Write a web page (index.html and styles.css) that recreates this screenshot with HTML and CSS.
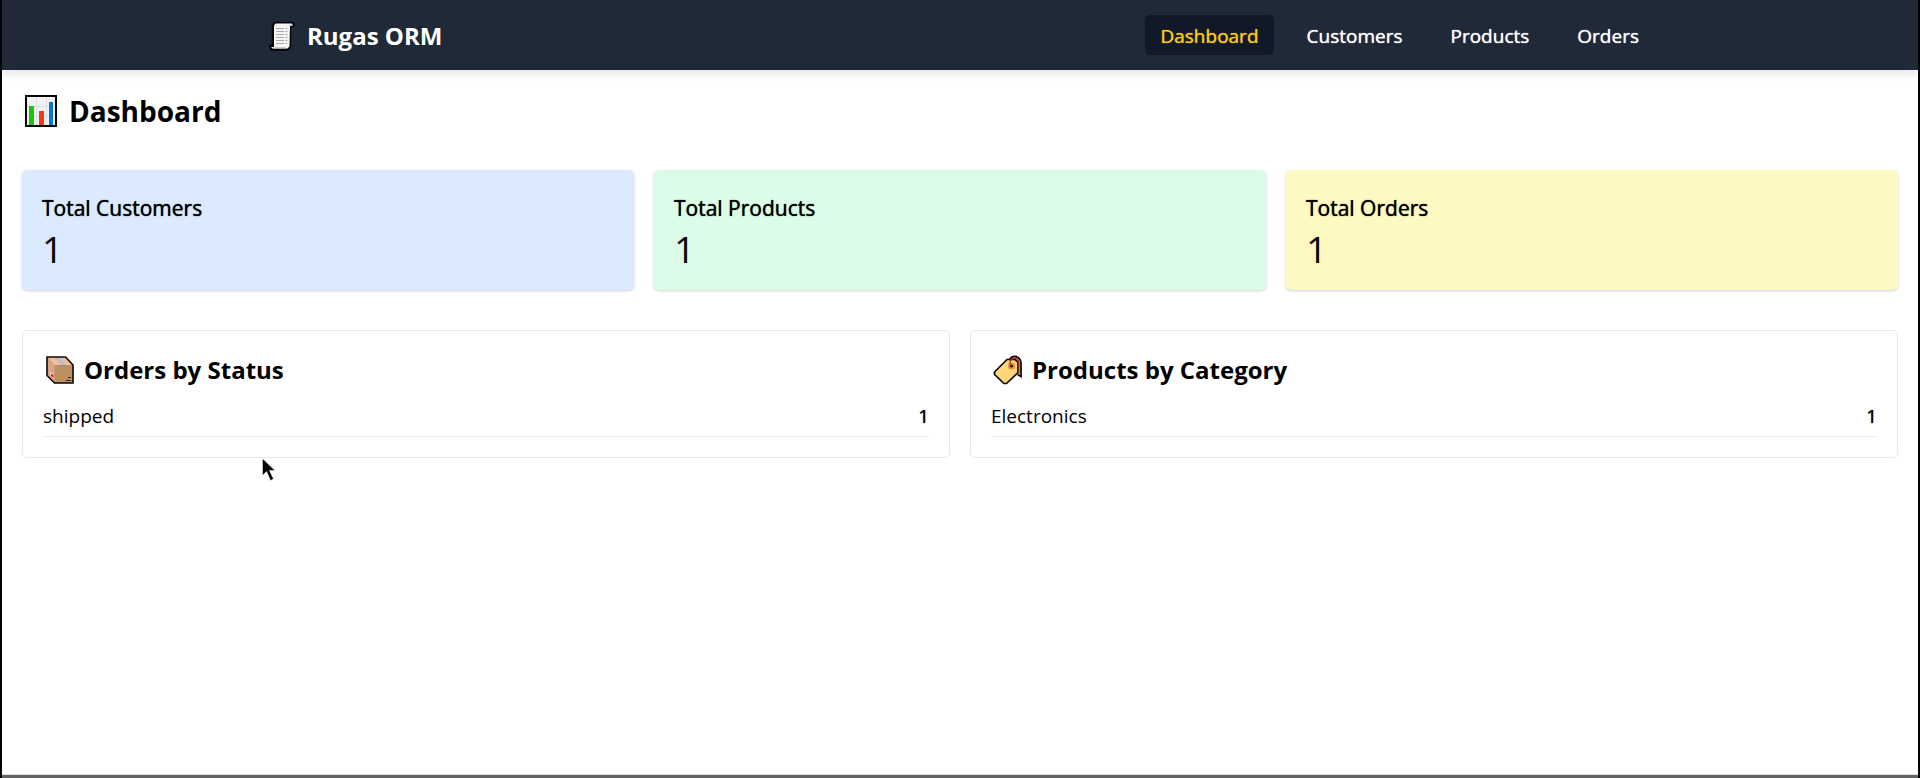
FILE: index.html
```html
<!DOCTYPE html>
<html lang="en">
<head>
<meta charset="utf-8">
<title>Rugas ORM</title>
<link rel="stylesheet" href="styles.css">
</head>
<body>
<header class="header">
  <div class="header-inner">
    <a class="brand" href="#">
      <svg class="brand-icon" width="26" height="30" viewBox="0 0 26 30" aria-hidden="true">
        <path d="M6 1.5h17.5l1.5 2v2h-3.500v20.500l-3 3H2.500L1 27v-2.500h2.500V4.500z" fill="#050608" stroke="#050608" stroke-width="1.500" stroke-linejoin="round"/>
        <path d="M6.500 2.500h16.500l.5 1.500H21l-.5 21.500-2 2H3.500L2 26h3V4.500z" fill="#f5f5f5"/>
        <path d="M4 26h12.500l1 1.500h-13zM20 3.500h3.500V5H20z" fill="#cfcfcf"/>
        <path d="M7 7.500h8M7 10.500h8M7 13.500h8M7 16.500h8M7 19.500h8M7 22.500h8M16.500 7.500h2M16.500 10.500h2M16.500 13.500h2M16.500 16.500h2M16.500 19.500h2M16.500 22.500h2" stroke="#aaa" fill="none"/>
      </svg>
      <span>Rugas ORM</span>
    </a>
    <nav class="nav">
      <a class="nav-link active" href="#">Dashboard</a>
      <a class="nav-link" href="#">Customers</a>
      <a class="nav-link" href="#">Products</a>
      <a class="nav-link" href="#">Orders</a>
    </nav>
  </div>
</header>
<main class="main">
  <h1 class="title">
    <svg width="32" height="32" viewBox="0 0 32 32" aria-hidden="true">
      <rect x="1" y="1" width="30" height="30" fill="#f2f2f2" stroke="#050505" stroke-width="2"/>
      <path d="M11.500 2v28M21.500 2v28M2 11.500h28M2 21.500h28" stroke="#dedede"/>
      <path d="M4 11h5v19H4z" fill="#16c60c"/>
      <path d="M14 16h5v14h-5z" fill="#f03a17"/>
      <path d="M24 7h4v23h-4z" fill="#0078d7"/>
    </svg>
    <span>Dashboard</span>
  </h1>
  <section class="stats">
    <article class="stat blue"><h2 class="stat-label">Total Customers</h2><p class="stat-value">1</p></article>
    <article class="stat green"><h2 class="stat-label">Total Products</h2><p class="stat-value">1</p></article>
    <article class="stat yellow"><h2 class="stat-label">Total Orders</h2><p class="stat-value">1</p></article>
  </section>
  <section class="panels">
    <article class="panel">
      <h2 class="panel-title">
        <svg width="30" height="30" viewBox="0 0 30 30" aria-hidden="true">
          <path d="M2 2h18.500l7.500 8v18H9.500L2 20.500z" fill="#bd905f"/>
          <path d="M2 2h18.500l7.500 8H9.500z" fill="#f0bfa0"/>
          <path d="M2 2l7.500 8v18L2 20.500z" fill="#dba584"/>
          <path d="M10 2.500h4.500l6.500 7.500h-4.500z" fill="#b9bcc2"/>
          <path d="M16.500 10H21v2h-4.500z" fill="#8b9199"/>
          <path d="M5.500 17l3 2.500v4l-3-3z" fill="#fff"/>
          <path d="M6 18.500l2.500 1.500v3L6 21z" fill="#e81224"/>
          <path d="M23 22.500h3M21 25.500h5" stroke="#3c2a1a"/>
          <path d="M2 2h18.500l7.500 8v18H9.500L2 20.500z" fill="none" stroke="#080808" stroke-width="1.600"/>
        </svg>
        <span>Orders by Status</span>
      </h2>
      <ul class="rows"><li class="row"><span>shipped</span><span class="count">1</span></li></ul>
      <svg class="pointer" width="14" height="24" viewBox="0 0 14 24" aria-hidden="true">
        <path d="M.5.500v17l4-4 4 9 3-1.500-4-8.500h5.500z" fill="#000" stroke="#fff" stroke-width=".5"/>
      </svg>
    </article>
    <article class="panel">
      <h2 class="panel-title">
        <svg width="30" height="30" viewBox="0 0 30 30" aria-hidden="true">
          <path d="M14 4.500L1.500 17v2.500l9.500 9h2.500L25 17.500V7l-3-2.500z" fill="#ffd679" stroke="#080808" stroke-width="1.700" stroke-linejoin="round"/>
          <circle cx="18.500" cy="11" r="3.500" fill="#e8912d"/>
          <circle cx="18.500" cy="11" r="1.600" fill="#3a1408"/>
          <path d="M16.500 4.500Q19 1 22.500 1.500q5.500 1 5.500 7.500v12.500l-3.500-2" fill="none" stroke="#170806" stroke-width="1.800"/>
          <path d="M17 9.500q-.5-5.500 4-6.500 4.500 0 5 5v11" fill="none" stroke="#a83218" stroke-width="1.300"/>
        </svg>
        <span>Products by Category</span>
      </h2>
      <ul class="rows"><li class="row"><span>Electronics</span><span class="count">1</span></li></ul>
    </article>
  </section>
</main>
</body>
</html>
```
FILE: styles.css
```css
* {
  box-sizing: border-box;
  margin: 0;
  padding: 0;
}

body {
  display: flex;
  flex-direction: column;
  min-height: 100vh;
  border: solid #000;
  border-width: 0 2px;
  background: #fff;
  color: #000;
  font: 19px/30px "Open Sans", "Noto Sans", sans-serif;
}

.header {
  background: #1f2937;
  box-shadow: 0 4px 8px rgba(0, 0, 0, 0.1);
  color: #fff;
}

.header-inner {
  display: flex;
  align-items: center;
  justify-content: space-between;
  max-width: 1440px;
  margin: 0 auto;
  padding: 15px 26px 15px 29px;
}

.brand {
  display: flex;
  align-items: center;
  gap: 12px;
  padding-top: 2px;
  color: inherit;
  font-size: 24px;
  font-weight: 700;
  text-decoration: none;
}

.nav {
  display: flex;
  gap: 18px;
}

.nav-link {
  padding: 6px 15px 4px;
  border-radius: 5px;
  color: inherit;
  font-weight: 500;
  text-decoration: none;
  text-shadow: 0 0 1px currentColor;
}

.nav-link.active {
  background: #111827;
  color: #facc15;
}

.main {
  flex: 1;
  padding: 20px;
  border-bottom: 3px solid #636363;
  box-shadow: inset 0 -1px #e0e0e0;
}

.title {
  display: flex;
  align-items: center;
  gap: 12px;
  margin-bottom: 38px;
  padding-left: 3px;
  font-size: 28px;
  line-height: 42px;
}

.stats,
.panels {
  display: grid;
  gap: 20px;
}

.stats {
  grid-template-columns: repeat(3, 1fr);
  margin-bottom: 40px;
}

.stat {
  padding: 20px;
  border-radius: 5px;
  box-shadow: 0 1px 3px rgba(0, 0, 0, 0.18);
}

.blue {
  background: #dbeafe;
}

.green {
  background: #dcfce7;
}

.yellow {
  background: #fef9c3;
}

.stat-label {
  font-size: 21px;
  font-weight: 500;
  line-height: 37px;
  text-shadow: 0 0 1px currentColor;
}

.stat-value {
  font-size: 37px;
  line-height: 43px;
}

.panels {
  grid-template-columns: repeat(2, 1fr);
}

.panel {
  position: relative;
  padding: 20px;
  border: 1px solid #e5e7eb;
  border-radius: 5px;
}

.panel-title {
  display: flex;
  align-items: center;
  gap: 9px;
  margin-bottom: 11px;
  padding-left: 2px;
  font-size: 24px;
  line-height: 38px;
}

.rows {
  list-style: none;
}

.row {
  display: flex;
  justify-content: space-between;
  padding-bottom: 4px;
  border-bottom: 1px solid #e5e7eb;
  line-height: 32px;
}

.count {
  font-weight: 500;
  text-shadow: 0 0 1px currentColor;
}

.pointer {
  position: absolute;
  top: 127px;
  left: 239px;
}
```
